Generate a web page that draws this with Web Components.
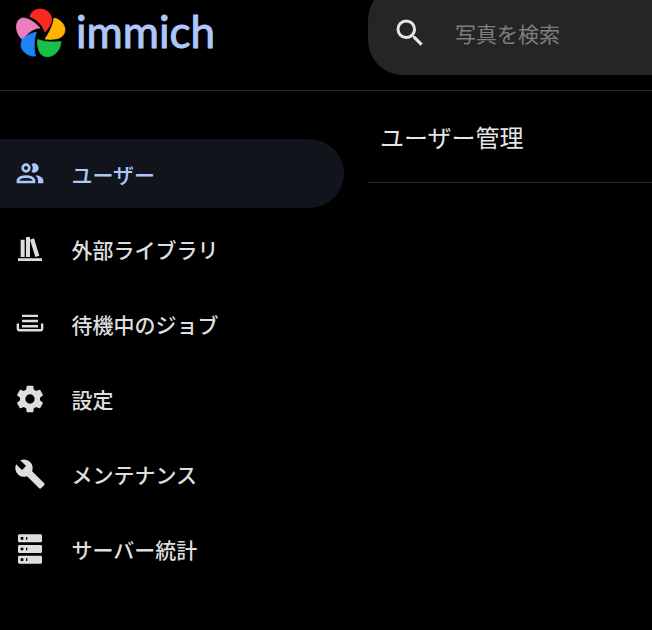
<!DOCTYPE html>
<html lang="ja">
<head>
<meta charset="utf-8">
<title>immich</title>
<style>
html, body { margin: 0; height: 100%; background: #000; overflow: hidden; }
body { font-family: "Noto Sans CJK JP", "Noto Sans", sans-serif; color: #e5e7eb; }
</style>
</head>
<body>
<template id="logo-tpl">
  <style>
    :host { display: flex; align-items: flex-start; gap: 10px; padding: 8px 0 0 16px; }
    svg { width: 50px; height: 50px; flex: none; overflow: visible; }
    path { stroke-width: .7; stroke-linejoin: round; }
    span { font: 400 44px/46px Lato, "Noto Sans", sans-serif; color: #acc8fb; -webkit-text-stroke: 1px #acc8fb; }
  </style>
  <svg viewBox="0 0 50 50">
    <path d="M14 8.7C15 3 20 1 24 1C31 1 36 6 35.7 12C35.5 16 32 21 29 24C26 16 20 11 14 8.7Z" fill="#fa2921" stroke="#fa2921"/>
    <path d="M.5 20C0 13 4 9.5 8 10C14 11 20 15 24 20C17 20.5 11 25 7 32C3 29 1 25 .5 20Z" fill="#ec7ec0" stroke="#ec7ec0"/>
    <path d="M38 10C44 11 49.5 17 49 22C49 27 44 31 39 31C36 31.5 32 31.5 29 31C33 25 37 18 38 10Z" fill="#ffb400" stroke="#ffb400"/>
    <path d="M21.5 31.5C29 34 37 34.5 45 33.5C45 41 39 48.5 32 48.7C28 48.8 25 47 23.5 44C22 40 21 36 21.5 31.5Z" fill="#18c249" stroke="#18c249"/>
    <path d="M20.5 24C18 30 17.5 40 19.5 48C13 49 6 44 5 38C5 34 6 31 7.5 30C11 27 16 25 20.5 24Z" fill="#1e83f7" stroke="#1e83f7"/>
  </svg>
  <span>immich</span>
</template>

<template id="search-tpl">
  <style>
    :host { display: flex; align-items: center; gap: 27px; box-sizing: border-box; height: 90px; margin-top: -15px; padding: 5px 0 0 24px; background: #252525; border-radius: 35px 0 0 35px; }
    svg { width: 36px; height: 36px; flex: none; }
    span { font-size: 21px; color: #7f7f7f; }
  </style>
  <svg viewBox="0 0 24 24"><path fill="#e5e5e5" d="M9.5 3A6.5 6.5 0 0 1 16 9.5c0 1.61-.59 3.09-1.56 4.23l.27.27h.79l5 5-1.5 1.5-5-5v-.79l-.27-.27A6.516 6.516 0 0 1 9.5 16 6.5 6.5 0 0 1 3 9.5 6.5 6.5 0 0 1 9.5 3m0 2C7 5 5 7 5 9.5S7 14 9.5 14 14 12 14 9.5 12 5 9.5 5Z"/></svg>
  <span><slot></slot></span>
</template>

<template id="nav-tpl">
  <style>
    :host { display: flex; align-items: center; gap: 25.5px; box-sizing: border-box; height: 69px; padding-left: 15px; margin-right: 24px; border-radius: 0 35px 35px 0; color: #dedede; font-size: 21px; font-weight: 500; }
    :host([active]) { background: #11151b; color: #acc8fb; }
    ::slotted(svg) { width: 32px; height: 32px; margin-left: -1px; flex: none; fill: currentColor; }
    span { padding-top: 1px; }
  </style>
  <slot name="icon"></slot>
  <span><slot></slot></span>
</template>

<template id="shell-tpl">
  <style>
    :host { display: grid; grid-template-columns: 368px 1fr; grid-template-rows: 91px 1fr; height: 630px; overflow: hidden; }
    .top { grid-column: 1 / 3; display: grid; grid-template-columns: 368px 1fr; height: 90px; border-bottom: 1px solid #2a2a2a; }
    nav { display: flex; flex-direction: column; gap: 6px; padding-top: 48px; }
    main { padding-top: 28px; }
    h1 { margin: 0; height: 63px; padding-left: 12px; font-size: 24px; line-height: 36px; font-weight: 400; color: #e5e5e5; border-bottom: 1px solid #2a2a2a; }
  </style>
  <div class="top"><slot name="logo"></slot><slot name="search"></slot></div>
  <nav><slot name="nav"></slot></nav>
  <main><h1><slot name="title"></slot></h1></main>
</template>

<admin-shell>
  <immich-logo slot="logo"></immich-logo>
  <search-bar slot="search">写真を検索</search-bar>
  <nav-item slot="nav" active>
    <svg slot="icon" viewBox="0 0 24 24"><path d="M13.07 10.41A5 5 0 0 0 13.07 4.59 3.39 3.39 0 0 1 15 4 3.5 3.5 0 0 1 15 11 3.39 3.39 0 0 1 13.07 10.41M5.5 7.5A3.5 3.5 0 1 1 9 11 3.5 3.5 0 0 1 5.5 7.5M7.5 7.5A1.5 1.5 0 1 0 9 6 1.5 1.5 0 0 0 7.5 7.5M16 17V19H2V17S2 13 9 13 16 17 16 17M14 17C13.86 16.22 12.67 15 9 15S4.07 16.22 4 17M15.95 13A5.32 5.32 0 0 1 18 17V19H22V17S22 13.37 15.94 13Z"/></svg>
    ユーザー
  </nav-item>
  <nav-item slot="nav">
    <svg slot="icon" viewBox="0 0 24 24"><path d="M9 3V18H12V3H9M12 5L16 18L19 17L15 4L12 5M5 5V18H8V5H5M3 19V21H21V19H3Z"/></svg>
    外部ライブラリ
  </nav-item>
  <nav-item slot="nav">
    <svg slot="icon" viewBox="0 0 24 24"><path d="M2 11.6H3.8V15.8H20.2V11.6H22V15.6C22 16.7 21.1 17.6 20 17.6H4C2.9 17.6 2 16.7 2 15.6V11.6M6 5H18V6.8H6V5M6 8.9H18V10.7H6V8.9M6 12.8H18V14.6H6V12.8Z"/></svg>
    待機中のジョブ
  </nav-item>
  <nav-item slot="nav">
    <svg slot="icon" viewBox="0 0 24 24"><path d="M12 15.5A3.5 3.5 0 0 1 8.5 12 3.5 3.5 0 0 1 12 8.5a3.5 3.5 0 0 1 3.5 3.5 3.5 3.5 0 0 1-3.5 3.5m7.43-2.53c.04-.32.07-.64.07-.97 0-.33-.03-.66-.07-1l2.11-1.63c.19-.15.24-.42.12-.64l-2-3.46c-.12-.22-.39-.31-.61-.22l-2.49 1c-.52-.39-1.06-.73-1.69-.98l-.37-2.65A.506.506 0 0 0 14 2h-4c-.25 0-.46.18-.5.42l-.37 2.65c-.63.25-1.17.59-1.69.98l-2.49-1c-.22-.09-.49 0-.61.22l-2 3.46c-.13.22-.07.49.12.64L4.57 11c-.04.34-.07.67-.07 1 0 .33.03.65.07.97l-2.11 1.66c-.19.15-.25.42-.12.64l2 3.46c.12.22.39.3.61.22l2.49-1.01c.52.4 1.06.74 1.69.99l.37 2.65c.04.24.25.42.5.42h4c.25 0 .46-.18.5-.42l.37-2.65c.63-.26 1.17-.59 1.69-.99l2.49 1.01c.22.08.49 0 .61-.22l2-3.46c.12-.22.07-.49-.12-.64l-2.11-1.66Z"/></svg>
    設定
  </nav-item>
  <nav-item slot="nav">
    <svg slot="icon" viewBox="0 0 24 24"><path d="M22.7 19L13.6 9.9C14.5 7.6 14 4.9 12.1 3C10.1 1 7.1 .6 4.7 1.7L9 6L6 9L1.6 4.7C.4 7.1 .9 10.1 2.9 12.1C4.8 14 7.5 14.5 9.8 13.6L18.9 22.7C19.3 23.1 19.9 23.1 20.3 22.7L22.6 20.4C23.1 20 23.1 19.3 22.7 19Z"/></svg>
    メンテナンス
  </nav-item>
  <nav-item slot="nav">
    <svg slot="icon" viewBox="0 0 24 24"><path fill-rule="evenodd" d="M4 1H20A1 1 0 0 1 21 2V6A1 1 0 0 1 20 7H4A1 1 0 0 1 3 6V2A1 1 0 0 1 4 1M4 9H20A1 1 0 0 1 21 10V14A1 1 0 0 1 20 15H4A1 1 0 0 1 3 14V10A1 1 0 0 1 4 9M4 17H20A1 1 0 0 1 21 18V22A1 1 0 0 1 20 23H4A1 1 0 0 1 3 22V18A1 1 0 0 1 4 17M9 5H10V3H9V5M9 13H10V11H9V13M9 21H10V19H9V21M5 3V5H7V3H5M5 11V13H7V11H5M5 19V21H7V19H5Z"/></svg>
    サーバー統計
  </nav-item>
  <span slot="title">ユーザー管理</span>
</admin-shell>

<script>
// same small pattern for every element: clone template into an open shadow root
function define(name, tplId) {
    customElements.define(name, class extends HTMLElement {
        constructor() {
            super();
            this.attachShadow({ mode: 'open' });
            this.shadowRoot.appendChild(document.getElementById(tplId).content.cloneNode(true));
        }
    });
}

define('immich-logo', 'logo-tpl');
define('search-bar', 'search-tpl');
define('nav-item', 'nav-tpl');
define('admin-shell', 'shell-tpl');
</script>
</body>
</html>
